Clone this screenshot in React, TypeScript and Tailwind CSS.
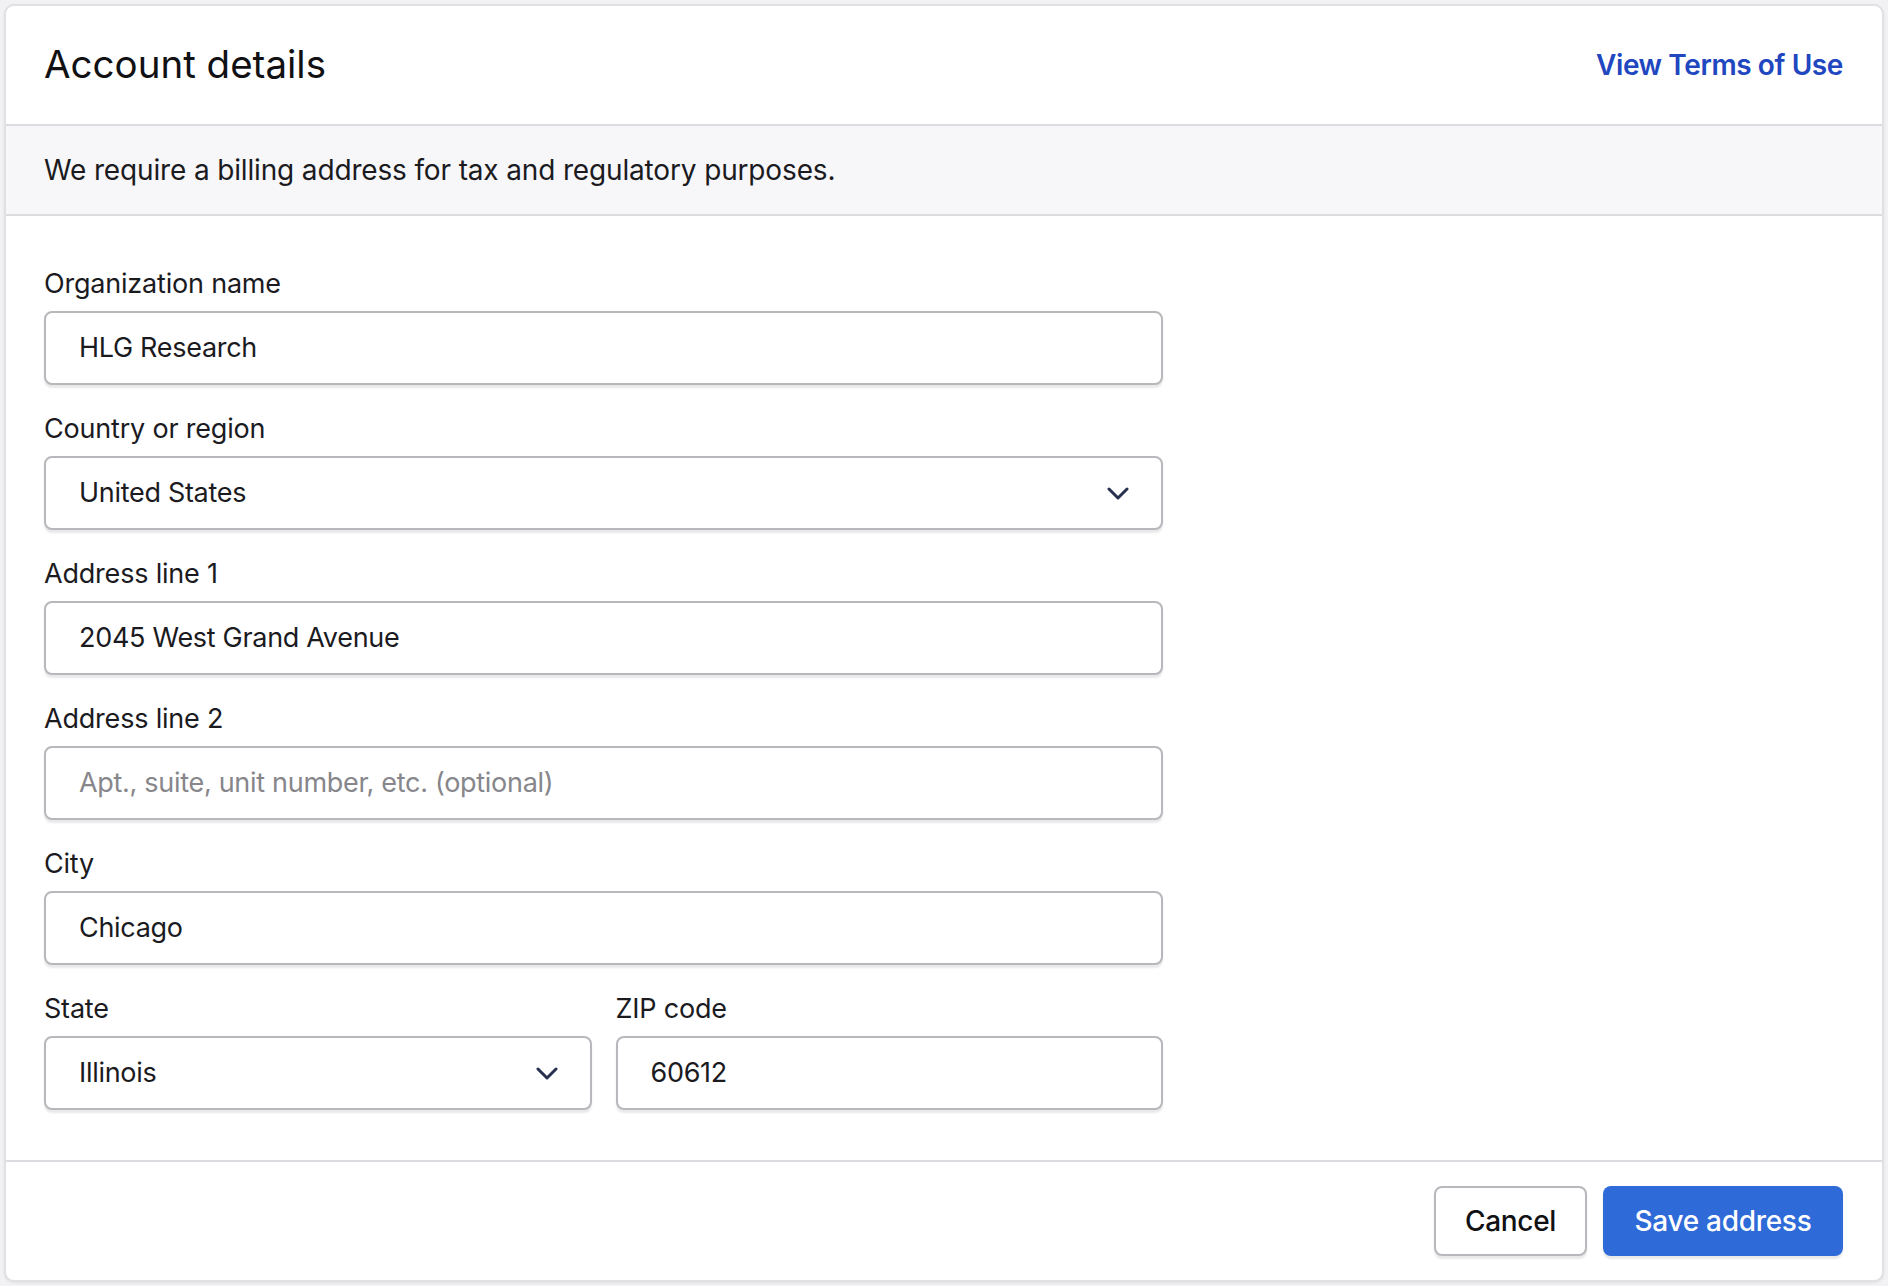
import React from "react";

function Chevron() {
  return (
    <svg width="22" height="13" viewBox="0 0 22 13" fill="none" className="shrink-0">
      <path d="M2 2 L11 11 L20 2" stroke="#27304f" strokeWidth="3" strokeLinecap="round" strokeLinejoin="round" />
    </svg>
  );
}

function Field({
  label,
  value,
  placeholder,
  select,
}: {
  label: string;
  value?: string;
  placeholder?: string;
  select?: boolean;
}) {
  return (
    <div className="flex flex-col">
      <div className="h-[38px] leading-[38px] text-[27px] tracking-[-0.2px] text-[#1b1b1f] mb-[8px]">{label}</div>
      <div className="h-[74px] rounded-[8px] border-2 border-[#b7b7bc] bg-white shadow-[0_3px_2px_rgba(0,0,0,0.09)] flex items-center pl-[33px] pr-[32px]">
        <span
          className={
            "flex-1 text-[27px] tracking-[-0.3px] " + (value ? "text-[#1b1b1f]" : "text-[#86868b]")
          }
        >
          {value ?? placeholder}
        </span>
        {select ? <Chevron /> : null}
      </div>
    </div>
  );
}

export default function App() {
  return (
    <div
      className="h-screen overflow-hidden bg-[#f2f2f4] p-[4px]"
      style={{ fontFamily: "Inter, 'Noto Sans', 'Liberation Sans', sans-serif" }}
    >
      <div className="rounded-[10px] border-2 border-[#e1e1e4] bg-white shadow-[0_1px_3px_rgba(0,0,0,0.08)] overflow-hidden">
        <div className="h-[120px] flex items-center justify-between pl-[38px] pr-[39px] border-b-2 border-[#dcdce0]">
          <h1 className="text-[38.5px] font-normal text-[#111114]">Account details</h1>
          <a className="text-[28px] font-semibold tracking-[-0.4px] text-[#2047c0]">View Terms of Use</a>
        </div>
        <div className="h-[90px] flex items-center pl-[38px] bg-[#f7f7f9] border-b-2 border-[#dcdce0]">
          <p className="text-[28px] tracking-[-0.15px] text-[#1b1b1f]">
            We require a billing address for tax and regulatory purposes.
          </p>
        </div>
        <div className="pl-[38px] pt-[49px] pb-[50px]">
          <div className="w-[1119px] flex flex-col gap-[25px]">
            <Field label="Organization name" value="HLG Research" />
            <Field label="Country or region" value="United States" select />
            <Field label="Address line 1" value="2045 West Grand Avenue" />
            <Field label="Address line 2" placeholder="Apt., suite, unit number, etc. (optional)" />
            <Field label="City" value="Chicago" />
            <div className="grid grid-cols-2 gap-[24px]">
              <Field label="State" value="Illinois" select />
              <Field label="ZIP code" value="60612" />
            </div>
          </div>
        </div>
        <div className="h-[120px] border-t-2 border-[#dcdce0] flex items-center justify-end gap-[16px] pr-[39px]">
          <button className="w-[153px] h-[70px] rounded-[8px] border-2 border-[#b7b7bc] bg-white shadow-[0_3px_2px_rgba(0,0,0,0.09)] text-[28px] font-medium tracking-[-0.3px] text-[#111114] flex items-center justify-center">
            Cancel
          </button>
          <button className="w-[240px] h-[70px] rounded-[8px] bg-[#2e6ad8] shadow-[0_3px_2px_rgba(0,0,0,0.09)] text-[28px] font-medium tracking-[-0.3px] text-white flex items-center justify-center">
            Save address
          </button>
        </div>
      </div>
    </div>
  );
}
